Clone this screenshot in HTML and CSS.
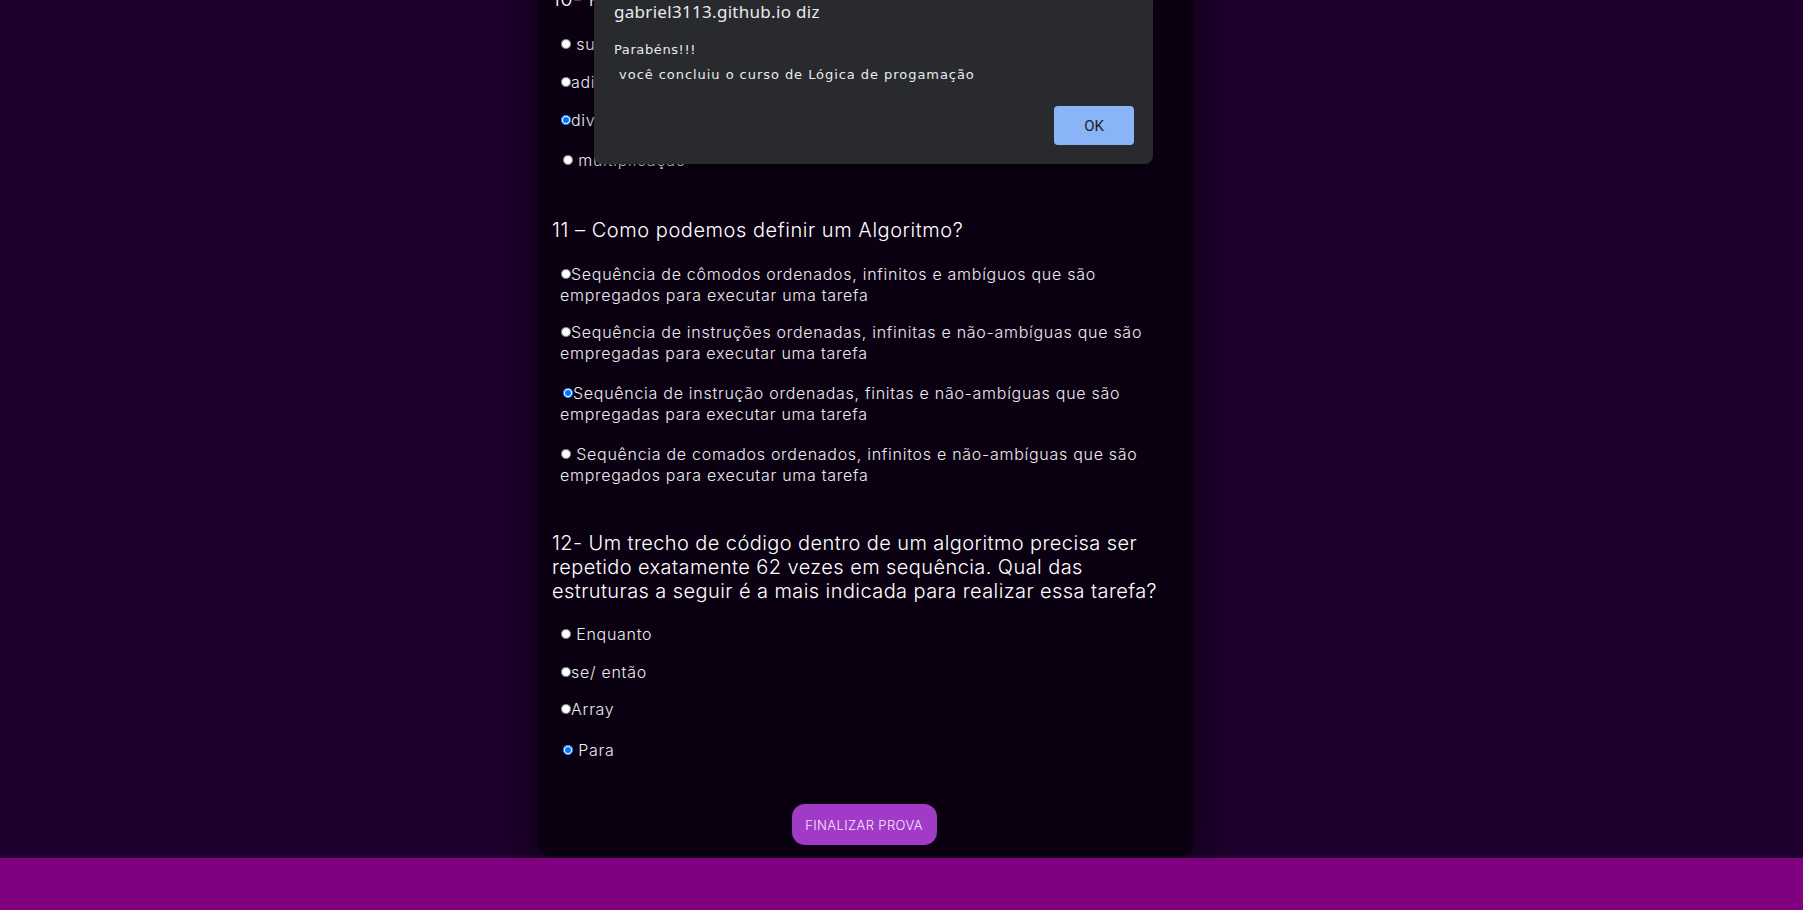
FILE: index.html
```html
<!DOCTYPE html>
<html lang="pt-BR">
<head>
<meta charset="utf-8">
<title>Prova - Lógica de programação</title>
<link rel="stylesheet" href="styles.css">
</head>
<body>
<main class="page">
  <section class="card">
    <form class="quiz">
      <h3 class="q q10">10- Para calcular o resto de uma conta, qual operação?</h3>
      <div class="opts">
        <label class="opt"><input type="radio" name="q10"> subtração</label>
        <label class="opt"><input type="radio" name="q10">adição</label>
        <label class="opt"><input type="radio" name="q10" checked>divisão</label>
        <label class="opt opt-in gap19"><input type="radio" name="q10"> multiplicação</label>
      </div>

      <h3 class="q q11">11 – Como podemos definir um Algoritmo?</h3>
      <div class="opts">
        <label class="opt"><input type="radio" name="q11">Sequência de cômodos ordenados, infinitos e ambíguos que são empregados para executar uma tarefa</label>
        <label class="opt gap16"><input type="radio" name="q11">Sequência de instruções ordenadas, infinitas e não-ambíguas que são empregadas para executar uma tarefa</label>
        <label class="opt opt-in gap19"><input type="radio" name="q11" checked>Sequência de instrução ordenadas, finitas e não-ambíguas que são empregadas para executar uma tarefa</label>
        <label class="opt gap19"><input type="radio" name="q11"> Sequência de comados ordenados, infinitos e não-ambíguas que são empregados para executar uma tarefa</label>
      </div>

      <h3 class="q q12">12- Um trecho de código dentro de um algoritmo precisa ser repetido exatamente 62 vezes em sequência. Qual das estruturas a seguir é a mais indicada para realizar essa tarefa?</h3>
      <div class="opts opts12">
        <label class="opt"><input type="radio" name="q12"> Enquanto</label>
        <label class="opt"><input type="radio" name="q12">se/ então</label>
        <label class="opt gap16"><input type="radio" name="q12">Array</label>
        <label class="opt opt-in gap20"><input type="radio" name="q12" checked> Para</label>
      </div>

      <div class="actions">
        <button type="button" class="finish">FINALIZAR PROVA</button>
      </div>
    </form>
  </section>
</main>
<footer class="footer"></footer>

<div class="dialog" role="alertdialog">
  <div class="dialog-title">gabriel3113.github.io diz</div>
  <div class="dialog-msg">
    <div class="msg-1">Parabéns!!!</div>
    <div class="msg-2">&nbsp;você concluiu o curso de Lógica de progamação</div>
  </div>
  <div class="dialog-actions">
    <button type="button" class="ok">OK</button>
  </div>
</div>
</body>
</html>
```
FILE: styles.css
```css
* { box-sizing: border-box; }

html, body {
  margin: 0;
  padding: 0;
}

body {
  width: 1803px;
  height: 910px;
  overflow: hidden;
  background: #1e002e;
  font-family: "Inter", "Open Sans", sans-serif;
  color: #f2f2f2;
}

.page {
  height: 858px;
  overflow: hidden;
  background: #1e002e;
}

.card {
  width: 655px;
  margin-left: 538px;
  margin-top: -30px;
  padding: 17px 30px 12px 14px;
  background: #0b0012;
  border-radius: 0 0 14px 14px;
  box-shadow: 0 0 40px 6px rgba(0, 0, 0, 0.55);
}

.quiz {
  display: flex;
  flex-direction: column;
}

.q {
  margin: 0;
  font-size: 20px;
  line-height: 24px;
  font-weight: 300;
  letter-spacing: 0.42px;
  color: #ffffff;
}

.q11 { margin-top: 47px; letter-spacing: 0.55px; }
.q12 { margin-top: 45px; }

.opts {
  display: flex;
  flex-direction: column;
  gap: 17px;
  margin-top: 23px;
  margin-left: 8px;
}

.q11 + .opts { margin-top: 22px; }
.opts12 { margin-top: 21px; }

.opt {
  display: block;
  font-size: 16px;
  line-height: 21px;
  font-weight: 300;
  letter-spacing: 0.72px;
  color: #ececec;
}

.gap16 { margin-top: -1px; }
.gap19 { margin-top: 2px; }
.gap20 { margin-top: 3px; }

.opt input {
  width: 10px;
  height: 10px;
  margin: 0 0 0 1px;
  vertical-align: 1px;
}

.opt-in input { margin-left: 3px; }

.actions {
  display: flex;
  justify-content: center;
  margin-top: 43px;
  padding-left: 13px;
}

.finish {
  width: 145px;
  height: 41px;
  border: none;
  border-radius: 13px;
  background: #a23ac8;
  color: #f4e8ff;
  font-family: "Inter", "Open Sans", sans-serif;
  font-size: 13px;
  font-weight: 300;
  letter-spacing: 0.4px;
  padding: 0;
}

.footer {
  height: 52px;
  background: #800080;
}

/* browser alert dialog */
.dialog {
  position: absolute;
  top: 0;
  left: 594px;
  width: 559px;
  height: 164px;
  padding: 0 19px 19px 20px;
  background: #292a2d;
  border-radius: 0 0 8px 8px;
  box-shadow: 0 2px 6px rgba(0, 0, 0, 0.5);
  display: flex;
  flex-direction: column;
}

.dialog-title {
  font-family: "Noto Sans", "Open Sans", sans-serif;
  font-size: 17px;
  line-height: 24px;
  letter-spacing: 0.3px;
  color: #e8eaed;
}

.dialog-msg {
  margin-top: 13px;
  font-family: "DejaVu Sans", sans-serif;
  font-size: 13px;
  line-height: 25px;
  color: #e8eaed;
}

.msg-1 { letter-spacing: 0.6px; }
.msg-2 { letter-spacing: 0.95px; }

.dialog-actions {
  display: flex;
  justify-content: flex-end;
  margin-top: 19px;
}

.ok {
  width: 80px;
  height: 39px;
  border: none;
  border-radius: 4px;
  background: #8ab4f8;
  color: #202124;
  font-family: "Roboto", sans-serif;
  font-size: 15px;
  padding: 0;
}
```
